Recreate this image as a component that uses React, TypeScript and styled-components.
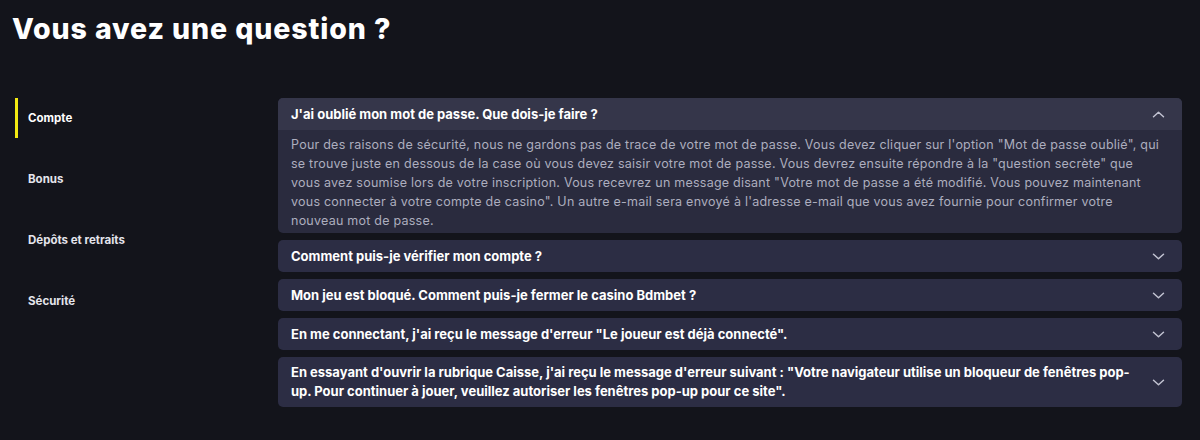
import React, { FC, useState } from 'react';
import styled, { createGlobalStyle } from 'styled-components';

const GlobalStyle = createGlobalStyle`
  html, body {
    margin: 0;
    padding: 0;
    background: #13141b;
  }

  * {
    box-sizing: border-box;
  }
`;

const Page = styled.div`
  width: 1200px;
  height: 440px;
  padding: 12px 18px 0 12px;
  background: #13141b;
  font-family: Inter, 'Noto Sans', sans-serif;
  color: #ffffff;
  overflow: hidden;
`;

const Title = styled.h1`
  margin: 0;
  font-size: 28.5px;
  font-weight: 800;
  letter-spacing: 0.9px;
  line-height: 34px;
`;

const Content = styled.div`
  display: grid;
  grid-template-columns: 266px 1fr;
  margin-top: 52px;
`;

const Sidebar = styled.nav`
  display: flex;
  flex-direction: column;
  padding-left: 3px;
`;

const SideItem = styled.div<{ $active?: boolean }>`
  display: flex;
  align-items: center;
  height: 40px;
  margin-bottom: 21px;
  padding-left: 10px;
  border-left: 3px solid ${(p) => (p.$active ? '#f3ea12' : 'transparent')};
  font-size: 11.5px;
  font-weight: 700;
  color: ${(p) => (p.$active ? '#ffffff' : '#e4e4ec')};
`;

const FaqList = styled.div`
  display: flex;
  flex-direction: column;
  gap: 7px;
`;

const FaqItem = styled.div<{ $open?: boolean }>`
  border-radius: 5px;
  overflow: hidden;
  background: ${(p) => (p.$open ? '#2a2b3e' : '#2c2d44')};
`;

const FaqHeader = styled.div<{ $open?: boolean }>`
  display: flex;
  align-items: center;
  justify-content: space-between;
  gap: 18px;
  min-height: 32px;
  padding: 6px 17px 6px 13px;
  background: ${(p) => (p.$open ? '#35364a' : 'transparent')};
  cursor: pointer;
`;

const Question = styled.span`
  font-size: 13px;
  font-weight: 700;
  line-height: 19px;
  color: #ffffff;
`;

const Answer = styled.p`
  margin: 0;
  padding: 5px 16px 3px 13px;
  font-size: 12.5px;
  letter-spacing: 0.24px;
  line-height: 19px;
  color: #adaebe;
`;

const Chevron: FC<{ up?: boolean }> = ({ up }) => (
  <svg width="13" height="13" viewBox="0 0 13 13" fill="none" style={{ flexShrink: 0 }}>
    <path
      d={up ? 'M1.5 8.8L6.5 4.2L11.5 8.8' : 'M1.5 4.2L6.5 8.8L11.5 4.2'}
      stroke="#c0c1d0"
      strokeWidth="1.5"
      strokeLinecap="round"
      strokeLinejoin="round"
    />
  </svg>
);

const categories = ['Compte', 'Bonus', 'Dépôts et retraits', 'Sécurité'];

const faqs = [
  {
    q: "J'ai oublié mon mot de passe. Que dois-je faire ?",
    a: 'Pour des raisons de sécurité, nous ne gardons pas de trace de votre mot de passe. Vous devez cliquer sur l\'option "Mot de passe oublié", qui se trouve juste en dessous de la case où vous devez saisir votre mot de passe. Vous devrez ensuite répondre à la "question secrète" que vous avez soumise lors de votre inscription. Vous recevrez un message disant "Votre mot de passe a été modifié. Vous pouvez maintenant vous connecter à votre compte de casino". Un autre e-mail sera envoyé à l\'adresse e-mail que vous avez fournie pour confirmer votre nouveau mot de passe.',
  },
  { q: 'Comment puis-je vérifier mon compte ?', a: '' },
  { q: 'Mon jeu est bloqué. Comment puis-je fermer le casino Bdmbet ?', a: '' },
  {
    q: 'En me connectant, j\'ai reçu le message d\'erreur "Le joueur est déjà connecté".',
    a: '',
  },
  {
    q: 'En essayant d\'ouvrir la rubrique Caisse, j\'ai reçu le message d\'erreur suivant : "Votre navigateur utilise un bloqueur de fenêtres pop-up. Pour continuer à jouer, veuillez autoriser les fenêtres pop-up pour ce site".',
    a: '',
  },
];

const App: FC = (): JSX.Element => {
  const [open, setOpen] = useState<number>(0);

  return (
    <Page>
      <GlobalStyle />
      <Title>Vous avez une question ?</Title>
      <Content>
        <Sidebar>
          {categories.map((c, i) => (
            <SideItem key={c} $active={i === 0}>
              {c}
            </SideItem>
          ))}
        </Sidebar>
        <FaqList>
          {faqs.map((f, i) => (
            <FaqItem key={f.q} $open={open === i}>
              <FaqHeader $open={open === i} onClick={() => setOpen(open === i ? -1 : i)}>
                <Question>{f.q}</Question>
                <Chevron up={open === i} />
              </FaqHeader>
              {open === i && f.a ? <Answer>{f.a}</Answer> : null}
            </FaqItem>
          ))}
        </FaqList>
      </Content>
    </Page>
  );
};

export default App;
